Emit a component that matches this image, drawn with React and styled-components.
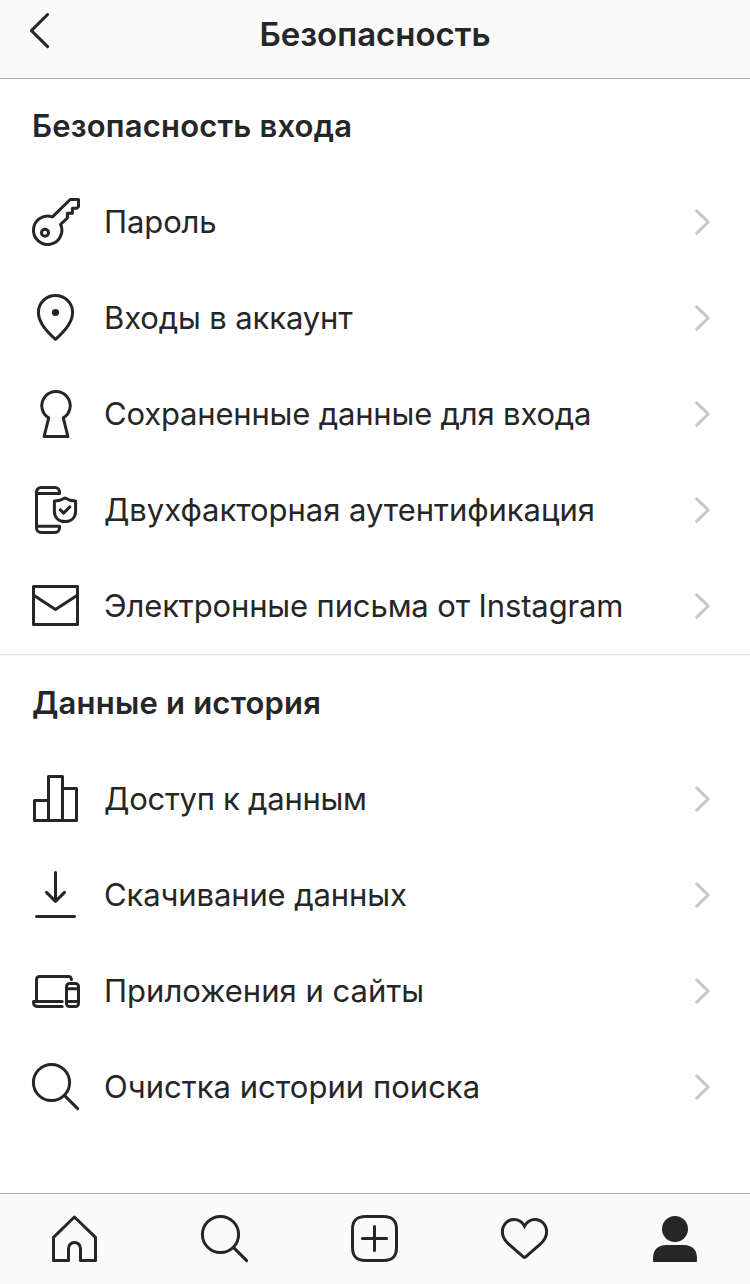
import React from "react";
import styled, { createGlobalStyle } from "styled-components";

const GlobalStyle = createGlobalStyle`
  *, *::before, *::after { box-sizing: border-box; }
  body { margin: 0; background: #fff; }
`;

const Screen = styled.div`
  display: flex;
  flex-direction: column;
  width: 750px;
  height: 1284px;
  background: #fff;
  color: #262626;
  font-family: Inter, "Liberation Sans", sans-serif;
`;

const Header = styled.header`
  display: grid;
  grid-template-columns: 80px 1fr 80px;
  height: 79px;
  background: #fafafa;
  border-bottom: 1px solid #a6a6a6;
`;

const BackButton = styled.button`
  display: flex;
  padding: 12px 0 0 29px;
  border: 0;
  background: none;
  color: inherit;
`;

const Title = styled.h1`
  margin: 0;
  padding-top: 14px;
  font-size: 33px;
  line-height: 40px;
  font-weight: 600;
  text-align: center;
  white-space: nowrap;
`;

const Main = styled.main`
  flex: 1;
`;

const Section = styled.section`
  & + & { border-top: 1px solid #dbdbdb; }
`;

const SectionTitle = styled.h2`
  display: flex;
  align-items: center;
  height: ${(p) => p.$height}px;
  margin: 0;
  padding: 0 0 2px 32px;
  font-size: 31px;
  font-weight: 600;
  letter-spacing: ${(p) => p.$tracking}px;
  white-space: nowrap;
`;

const Row = styled.a`
  display: flex;
  align-items: center;
  height: 96px;
  padding: 0 38px 0 32px;
`;

const RowLabel = styled.span`
  flex: 1;
  margin-left: 24px;
  font-size: 31px;
  line-height: 40px;
  letter-spacing: ${(p) => p.$tracking}px;
  white-space: nowrap;
`;

const TabBar = styled.nav`
  display: grid;
  grid-template-columns: repeat(5, 1fr);
  height: 91px;
  background: #fafafa;
  border-top: 1px solid #a6a6a6;
`;

const Tab = styled.a`
  display: flex;
  align-items: center;
  justify-content: center;
`;

const Glyph = styled.svg`
  display: block;
  flex: none;
  overflow: visible;
  fill: none;
  stroke: currentColor;
  stroke-width: 3;
  stroke-linecap: round;
  stroke-linejoin: round;
`;

const Chevron = styled(Glyph)`
  color: #c7c7c7;
  stroke-width: 3;
`;

const icons = {
  key: (
    <>
      <path d="M20.5 18.9 38.2 1.5H46.5V8.6L44.8 10.3H40.4V15.2H35.4V20L28.6 26.4A14.2 14.2 0 1 1 20.5 18.9Z" />
      <circle cx="13" cy="34.7" r="3.5" />
    </>
  ),
  pin: (
    <>
      <path d="M23.5 45.3C14.5 37.5 6.4 28 6.4 18.5a17.1 17.1 0 0 1 34.2 0C40.6 28 32.5 37.5 23.5 45.3Z" />
      <circle cx="23.5" cy="18.5" r="3.6" fill="currentColor" stroke="none" />
    </>
  ),
  keyhole: <path d="M16.7 27.8A14.2 14.2 0 1 1 31.3 27.8L35.9 46.5H12.1Z" />,
  phoneShield: (
    <>
      <path d="M4.5 7.4H27.5V6A4.5 4.5 0 0 0 23 1.5H9A4.5 4.5 0 0 0 4.5 6V42A4.5 4.5 0 0 0 9 46.5H23A4.5 4.5 0 0 0 27.5 42V40.2H4.5" strokeLinecap="butt" />
      <path d="M33 11.9C30.5 13.5 26.5 14.7 22.4 14.9V25C22.4 32 27 35.6 33 35.6S43.6 32 43.6 25V14.9C39.5 14.7 35.5 13.5 33 11.9Z" />
      <path d="M28.3 23.9 31.6 27.1 37.8 20.9" />
    </>
  ),
  mail: (
    <>
      <rect x="1.5" y="4.5" width="44" height="38" />
      <path d="M1.7 13.2 23.5 27.6 45.3 13.2" />
    </>
  ),
  bars: <path d="M2.5 25.5H16.5V45.5H2.5ZM16.5 1.5H30.5V45.5H16.5ZM30.5 13.5H44.5V45.5H30.5Z" />,
  download: <path d="M23.5 1.5V30.2M14.5 21.4 23.5 30.4 32.5 21.4M4.5 45.4H42.5" />,
  devices: (
    <>
      <path d="M39.4 12.6V12A3 3 0 0 0 36.4 9.4H7.5A3 3 0 0 0 4.5 12.4V34" />
      <path d="M30.2 34.6H1.5V35.5A4 4 0 0 0 5.5 39.5H30.2" />
      <rect x="34.5" y="16.5" width="12" height="23" rx="3" />
      <path d="M34.5 21.7H46.5M34.5 34.4H46.5" />
    </>
  ),
  search: (
    <>
      <circle cx="19.5" cy="19.5" r="18.1" />
      <path d="M32.6 32.6 45.6 45.6" />
    </>
  ),
  home: <path d="M23.4 2 44.5 22.3V45.5H29.5V33.4A6 6 0 0 0 17.5 33.4V45.5H2.5V22.3Z" />,
  add: (
    <>
      <path d="M14.5 1.5H32.5C41.5 1.5 45.5 5.5 45.5 14.5V32.5C45.5 41.5 41.5 45.5 32.5 45.5H14.5C5.5 45.5 1.5 41.5 1.5 32.5V14.5C1.5 5.5 5.5 1.5 14.5 1.5Z" />
      <path d="M23.5 11.4V35.6M11.4 23.5H35.6" />
    </>
  ),
  heart: (
    <path
      d="M23.5 11.2C21.3 6.8 17.3 4.4 13 4.4C6.6 4.4 1.4 9.8 1.4 17C1.4 22.5 4 25.8 8 29.4L22.4 41.8Q23.5 42.8 24.6 41.8L39 29.4C43 25.8 45.6 22.5 45.6 17C45.6 9.8 40.4 4.4 34 4.4C29.7 4.4 25.7 6.8 23.5 11.2Z"
      strokeLinejoin="miter"
    />
  ),
  profile: (
    <g fill="currentColor" stroke="none">
      <circle cx="24" cy="14" r="13" />
      <path d="M2 46V43C2 35 7 30 15 30H33C41 30 46 35 46 43V46A1 1 0 0 1 45 47H3A1 1 0 0 1 2 46Z" />
    </g>
  ),
};

const Icon = ({ name }) => (
  <Glyph width="48" height="48" viewBox="0 0 48 48" aria-hidden="true">
    {icons[name]}
  </Glyph>
);

const sections = [
  {
    title: "Безопасность входа",
    height: 95,
    tracking: 0.19,
    rows: [
      { icon: "key", label: "Пароль", tracking: -0.1 },
      { icon: "pin", label: "Входы в аккаунт", tracking: -0.13 },
      { icon: "keyhole", label: "Сохраненные данные для входа", tracking: -0.18 },
      { icon: "phoneShield", label: "Двухфакторная аутентификация", tracking: -0.04 },
      { icon: "mail", label: "Электронные письма от Instagram", tracking: -0.13 },
    ],
  },
  {
    title: "Данные и история",
    height: 96,
    tracking: 0.2,
    rows: [
      { icon: "bars", label: "Доступ к данным", tracking: -0.27 },
      { icon: "download", label: "Скачивание данных", tracking: -0.12 },
      { icon: "devices", label: "Приложения и сайты", tracking: 0.03 },
      { icon: "search", label: "Очистка истории поиска", tracking: 0.03 },
    ],
  },
];

const tabs = ["home", "search", "add", "heart", "profile"];

export default function App() {
  return (
    <Screen>
      <GlobalStyle />
      <Header>
        <BackButton aria-label="Назад">
          <Glyph width="22" height="38" viewBox="0 0 22 38">
            <path d="M18.6 2.5 2.4 18.6 18.6 34.6" />
          </Glyph>
        </BackButton>
        <Title>Безопасность</Title>
      </Header>
      <Main>
        {sections.map((section) => (
          <Section key={section.title}>
            <SectionTitle $height={section.height} $tracking={section.tracking}>
              {section.title}
            </SectionTitle>
            {section.rows.map((row) => (
              <Row key={row.label}>
                <Icon name={row.icon} />
                <RowLabel $tracking={row.tracking}>{row.label}</RowLabel>
                <Chevron width="18" height="28" viewBox="0 0 18 28">
                  <path d="M2.8 2.9 14.2 14 2.8 25.1" />
                </Chevron>
              </Row>
            ))}
          </Section>
        ))}
      </Main>
      <TabBar>
        {tabs.map((name) => (
          <Tab key={name}>
            <Icon name={name} />
          </Tab>
        ))}
      </TabBar>
    </Screen>
  );
}
